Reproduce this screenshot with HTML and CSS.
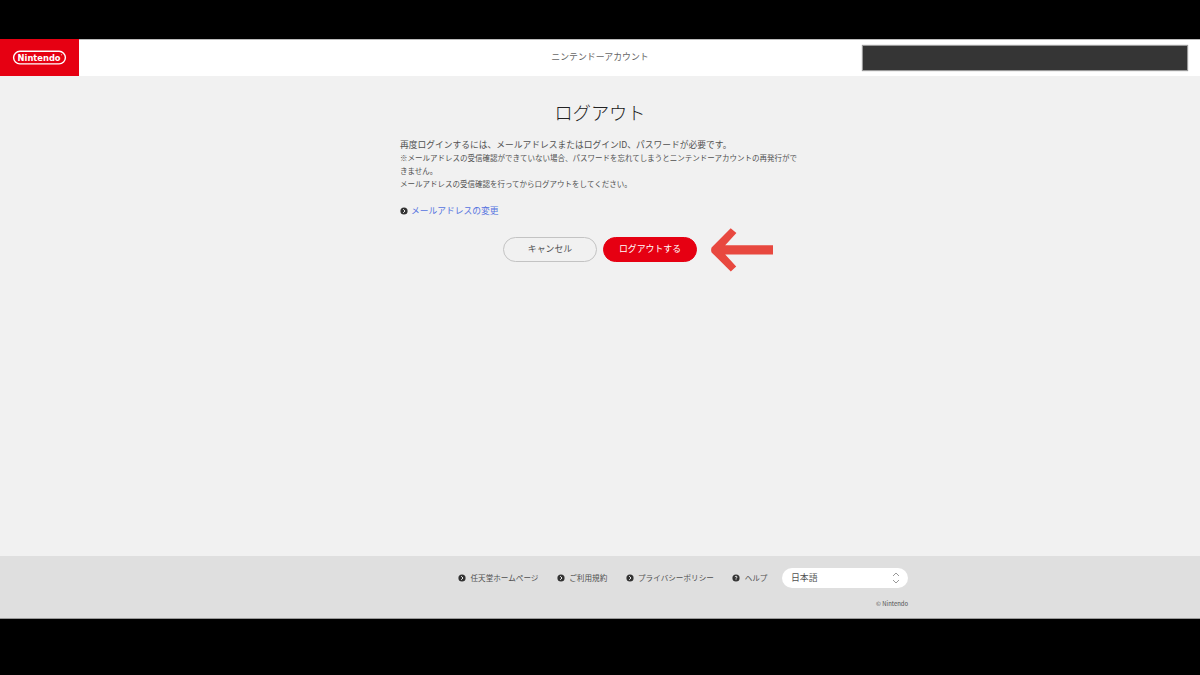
FILE: index.html
```html
<!DOCTYPE html>
<html lang="ja">
  <head>
    <meta charset="UTF-8" />
    <meta name="viewport" content="width=device-width, initial-scale=1.0" />
    <title>ログアウト</title>
    <link rel="stylesheet" href="styles.css">
  </head>
  <body>
    <div class="page">
      <header class="header">
        <a class="logo" href="#">
          <svg width="79" height="36" viewBox="0 0 79 36">
            <rect x="13.6" y="12.3" width="51.8" height="12.6" rx="6.3" fill="none" stroke="#fff" stroke-width="1.4" />
            <text x="17.6" y="22" textLength="43" lengthAdjust="spacingAndGlyphs">Nintendo</text>
            <circle cx="61.6" cy="15.8" r="0.5" fill="#fff" />
          </svg>
        </a>
        <p class="header_title">ニンテンドーアカウント</p>
        <div class="user_mask"></div>
      </header>

      <main class="main">
        <h1>ログアウト</h1>
        <p class="lead">再度ログインするには、メールアドレスまたはログインID、パスワードが必要です。</p>
        <p class="note">※メールアドレスの受信確認ができていない場合、パスワードを忘れてしまうとニンテンドーアカウントの再発行ができません。<br />メールアドレスの受信確認を行ってからログアウトをしてください。</p>
        <a class="mail_link" href="#">
          <svg class="dot" viewBox="0 0 8 8"><circle cx="4" cy="4" r="3.6" /><path d="M3.2 2.2 5 4 3.2 5.8" /></svg>
          メールアドレスの変更
        </a>
        <div class="buttons">
          <button class="btn">キャンセル</button>
          <button class="btn btn_red">ログアウトする</button>
          <svg class="arrow" width="64" height="46" viewBox="0 0 64 46">
            <path d="M1.6 19.4 20.7 0.3 26.4 5 15.2 17.3H63V26.4H15.2L26.2 38.4 20.8 43.6 1.6 24.4Q0.6 22 1.6 19.4Z" />
          </svg>
        </div>
      </main>

      <footer class="footer">
        <div class="footer_row">
          <a href="#"><svg class="dot" viewBox="0 0 8 8"><circle cx="4" cy="4" r="3.6" /><path d="M3.2 2.2 5 4 3.2 5.8" /></svg>任天堂ホームページ</a>
          <a href="#"><svg class="dot" viewBox="0 0 8 8"><circle cx="4" cy="4" r="3.6" /><path d="M3.2 2.2 5 4 3.2 5.8" /></svg>ご利用規約</a>
          <a href="#"><svg class="dot" viewBox="0 0 8 8"><circle cx="4" cy="4" r="3.6" /><path d="M3.2 2.2 5 4 3.2 5.8" /></svg>プライバシーポリシー</a>
          <a href="#"><svg class="dot" viewBox="0 0 8 8"><circle cx="4" cy="4" r="3.6" /><path d="M3.1 3.1C3.1 1.9 5 1.9 5 3.1 5 3.9 4 3.8 4 4.7M4 5.4V6.1" /></svg>ヘルプ</a>
          <div class="lang">
            <span>日本語</span>
            <svg width="8" height="12" viewBox="0 0 8 12"><path d="M1 4 4 1 7 4M1 8 4 11 7 8" /></svg>
          </div>
        </div>
        <p class="copy">© Nintendo</p>
      </footer>
    </div>
  </body>
</html>
```
FILE: styles.css
```css
* {
  box-sizing: border-box;
}

body {
  margin: 0;
  height: 675px;
  padding: 39px 0 56px;
  background: #000;
  color: #505050;
  font-family: 'Noto Sans CJK JP', sans-serif;
  overflow: hidden;
}

h1,
p {
  margin: 0;
  font-weight: 400;
}

a {
  color: inherit;
  text-decoration: none;
}

.page {
  height: 580px;
  display: flex;
  flex-direction: column;
  background: #f1f1f1;
}

.header {
  height: 37px;
  display: grid;
  grid-template-columns: 1fr auto 1fr;
  align-items: center;
  background: #fff;
  border-top: 1px solid #bbb;
}

.logo {
  width: 79px;
  height: 37px;
  margin-top: -1px;
  background: #e60012;
}

.logo svg {
  display: block;
}

.logo text {
  fill: #fff;
  font: bold 9px 'DejaVu Sans', sans-serif;
}

.header_title {
  font-size: 8.9px;
  line-height: 14px;
  margin-bottom: 2px;
  color: #666;
}

.user_mask {
  justify-self: end;
  width: 324px;
  height: 24px;
  margin: 0 13px 1px 0;
  background: #353535;
  box-shadow: 0 0 1px 1px #999;
}

.main {
  width: 400px;
  margin: 0 auto;
  flex: 1;
}

h1 {
  margin-top: 22px;
  font-size: 18.2px;
  font-weight: 300;
  line-height: 28px;
  text-align: center;
  color: #222;
}

.lead {
  margin-top: 12px;
  font-size: 8.75px;
  line-height: 14px;
}

.note {
  margin-top: -1px;
  font-size: 7.5px;
  line-height: 13px;
}

.mail_link {
  display: flex;
  align-items: center;
  gap: 4px;
  margin-top: 14px;
  font-size: 8.75px;
  line-height: 14px;
  color: #5573e0;
}

.dot {
  width: 8px;
  height: 8px;
  flex: none;
  fill: #333;
}

.mail_link .dot {
  margin-right: -1px;
}

.dot path {
  fill: none;
  stroke: #fff;
  stroke-width: 0.9;
}

.buttons {
  display: flex;
  gap: 6px;
  margin: 19px 0 0 103px;
  position: relative;
}

.btn {
  width: 94px;
  height: 25px;
  padding: 0 0 2px;
  border: 1px solid #c3c3c3;
  border-radius: 13px;
  background: transparent;
  color: #505050;
  font: 8.9px 'Noto Sans CJK JP', sans-serif;
}

.btn_red {
  border-color: #e60012;
  background: #e60012;
  color: #fff;
}

/* arrow drawn over the page next to the logout button */
.arrow {
  position: absolute;
  left: 207px;
  top: -9px;
  fill: #e8483f;
}

.footer {
  height: 63px;
  padding: 12px 292px 0 458px;
  background: #dfdfdf;
  border-bottom: 1px solid #999;
}

.footer_row {
  display: flex;
  align-items: center;
  font-size: 7.6px;
  line-height: 12px;
}

.footer_row a {
  display: flex;
  align-items: center;
  gap: 4.5px;
  margin-right: 18.3px;
  white-space: nowrap;
}

.lang {
  width: 126px;
  height: 20px;
  margin-left: auto;
  padding: 0 8px 0 9px;
  display: flex;
  align-items: center;
  justify-content: space-between;
  border-radius: 10px;
  background: #fff;
  font-size: 8.9px;
}

.footer_row a:nth-child(4) {
  margin-right: 0;
}

.lang path {
  fill: none;
  stroke: #999;
}

.copy {
  margin-top: 11px;
  font-size: 5.9px;
  line-height: 10px;
  text-align: right;
}
```
